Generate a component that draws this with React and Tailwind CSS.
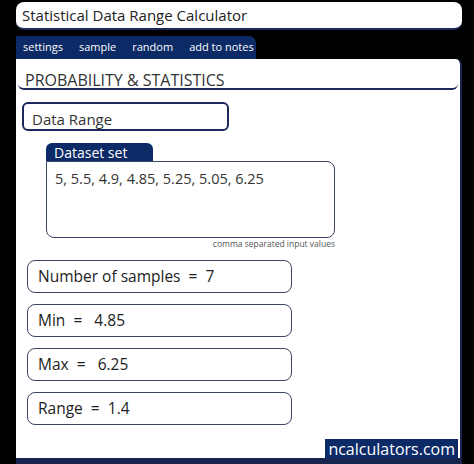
export default function App() {
  const results = [
    { label: "Number of samples  =  7" },
    { label: "Min  =   4.85" },
    { label: "Max  =   6.25" },
    { label: "Range  =  1.4" },
  ];

  return (
    <div
      className="w-[474px] h-[464px] bg-black overflow-hidden pl-[16px] pr-[12px] pt-[2px] flex flex-col"
      style={{ fontFamily: '"Open Sans", "Liberation Sans", sans-serif' }}
    >
      {/* Titre */}
      <div className="h-[28px] bg-white rounded-[8px] border-b-2 border-[#1b2a5a] flex items-center px-[6px] text-[15px] text-[#222]">
        Statistical Data Range Calculator
      </div>

      {/* Onglets */}
      <div className="mt-[6px] h-[23px] w-[240px] bg-[#0b2a66] rounded-tr-[7px] flex items-center gap-[16px] px-[7px] text-[11px] text-white whitespace-nowrap">
        <span>settings</span>
        <span>sample</span>
        <span>random</span>
        <span>add to notes</span>
      </div>

      {/* Panneau */}
      <div className="flex-1 bg-white rounded-tr-[6px] border-r-2 border-b-[6px] border-[#17244d] flex flex-col">
        <div className="h-[31px] mx-[2px] border-b-2 border-[#1b2a5a] rounded-b-[6px] flex items-end pb-[0px] px-[7px] text-[16px] leading-[15px] text-[#333]">
          PROBABILITY &amp; STATISTICS
        </div>

        <div className="mt-[12px] ml-[6px] w-[207px] h-[29px] border-2 border-[#1b2a5a] rounded-[6px] pt-[8px] px-[8px] text-[15px] leading-[15px] text-[#333]">
          Data Range
        </div>

        <div className="mt-[12px] ml-[30px] w-[289px] flex flex-col">
          <div className="w-[107px] h-[18px] bg-[#0b2a66] rounded-t-[6px] text-white text-[14px] flex items-center px-[8px]">
            Dataset set
          </div>
          <div className="h-[77px] border-[1.5px] border-[#3a4466] rounded-[8px] rounded-tl-none px-[8px] pt-[6px] text-[14.5px] text-[#333]">
            5, 5.5, 4.9, 4.85, 5.25, 5.05, 6.25
          </div>
          <div className="text-right text-[8.5px] text-[#555] leading-[11px]">comma separated input values</div>
        </div>

        <div className="mt-[11px] ml-[11px] w-[265px] flex flex-col gap-[11px]">
          {results.map((r) => (
            <div
              key={r.label}
              className="h-[33px] border-[1.5px] border-[#3a4466] rounded-[8px] flex items-center pt-[1px] px-[10px] text-[15.5px] text-[#222] whitespace-pre"
            >
              {r.label}
            </div>
          ))}
        </div>

        <div className="mt-auto self-end mr-[2px] h-[19px] bg-[#0b2a66] text-white text-[16px] flex items-center px-[3px]">
          ncalculators.com
        </div>
      </div>
    </div>
  );
}
